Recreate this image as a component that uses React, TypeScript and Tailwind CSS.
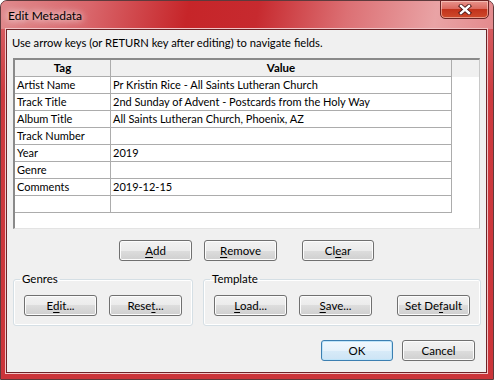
import React from "react";

type Row = { tag: string; value: string };

const rows: Row[] = [
  { tag: "Artist Name", value: "Pr Kristin Rice - All Saints Lutheran Church" },
  { tag: "Track Title", value: "2nd Sunday of Advent - Postcards from the Holy Way" },
  { tag: "Album Title", value: "All Saints Lutheran Church, Phoenix, AZ" },
  { tag: "Track Number", value: "" },
  { tag: "Year", value: "2019" },
  { tag: "Genre", value: "" },
  { tag: "Comments", value: "2019-12-15" },
  { tag: "", value: "" },
];

const btn =
  "h-[21px] rounded-[3px] border border-[#707070] bg-[linear-gradient(#f2f2f2_0%,#ebebeb_50%,#dddddd_50%,#cfcfcf_100%)] shadow-[inset_0_0_0_1px_#fcfcfc] text-[11.5px] leading-none text-black flex items-center justify-center";

const okBtn =
  "h-[21px] rounded-[3px] border border-[#3c7fb1] bg-[linear-gradient(#f1f8fd_0%,#e6f2fb_50%,#d8ebf8_50%,#cde4f5_100%)] shadow-[inset_0_0_0_1px_#bfe4f9] text-[11.5px] leading-none text-black flex items-center justify-center";

const U = ({ children }: { children: React.ReactNode }) => (
  <span className="underline underline-offset-2 decoration-1">{children}</span>
);

const Group = ({
  title,
  className,
  inner,
  children,
}: {
  title: string;
  className: string;
  inner: string;
  children: React.ReactNode;
}) => (
  <fieldset className={`rounded-[3px] border border-[#d5dfe5] shadow-[inset_0_0_0_1px_#ffffff] pb-[9px] ${className}`}>
    <legend className="ml-[6px] px-[2px] text-[11.5px] leading-[14px]">{title}</legend>
    <div className={`flex mt-[9px] ${inner}`}>{children}</div>
  </fieldset>
);

export default function App() {
  return (
    <div className="w-[494px] h-[380px] font-['Lato',sans-serif] text-black">
      <div className="w-[494px] h-[380px] flex flex-col rounded-t-[7px] border border-[#5e3a3c] bg-[linear-gradient(to_bottom,#d9686c_0%,#cd3a3f_25%,#cb3439_100%)] pl-[5px] pr-[6px] pb-[6px]">
        {/* title bar */}
        <div className="h-[28px] -ml-[5px] -mr-[6px] pl-[7px] pr-[4px] flex items-start rounded-t-[6px] bg-[linear-gradient(100deg,#e08a8d_0%,#d9666b_18%,#c62529_38%,#c72a2f_52%,#dc7074_70%,#e9a3a5_88%,#e48a8d_100%)]">
          <span className="self-center text-[12px] leading-[15px] mt-[1px] [text-shadow:0_0_7px_#fff,0_0_10px_rgba(255,255,255,0.8)]">
            Edit Metadata
          </span>
          <div className="ml-auto -mt-px w-[49px] h-[19px] rounded-b-[5px] border border-[#6b2424] bg-[linear-gradient(#e8938c_0%,#db6a5f_45%,#c2331c_50%,#cf4a2b_100%)] shadow-[inset_0_0_0_1px_rgba(255,220,210,0.55)] flex items-center justify-center">
            <svg width="14" height="11" viewBox="0 0 14 11">
              <path d="M3 2 L11 9 M11 2 L3 9" stroke="#4a1414" strokeWidth="4.2" strokeLinecap="square" />
              <path d="M3 2 L11 9 M11 2 L3 9" stroke="#ffffff" strokeWidth="2.4" strokeLinecap="square" />
            </svg>
          </div>
        </div>

        {/* client */}
        <div className="flex-1 flex flex-col bg-[#f0f0f0] border border-[#6d2226] shadow-[0_0_0_1px_#f2c4c6] text-[11px]">
          <div className="mt-[5px] pl-[5px] h-[15px] leading-[15px] text-[11.2px]">
            Use arrow keys (or RETURN key after editing) to navigate fields.
          </div>

          {/* list box */}
          <div className="mt-[8px] ml-[6px] w-[467px] h-[171px] border-t-2 border-l-2 border-t-[#8a8a8a] border-l-[#8a8a8a] border-r border-b border-r-[#c8c8c8] border-b-[#e3e3e3] bg-white flex flex-col">
            <div className="flex h-[17px] bg-[#f0f0f0] leading-[16px] text-[11.5px]">
              <div className="w-[96px] border-r border-b border-[#acacac] text-center font-bold">Tag</div>
              <div className="w-[341px] border-r border-b border-[#acacac] text-center font-bold">Value</div>
            </div>
            {rows.map((r, i) => (
              <div key={i} className="flex h-[17px] leading-[16px]">
                <div className="w-[96px] border-r border-b border-[#acacac] pl-[2px] whitespace-nowrap">{r.tag}</div>
                <div className="w-[341px] border-r border-b border-[#acacac] pl-[2px] whitespace-nowrap overflow-hidden">{r.value}</div>
              </div>
            ))}
          </div>

          {/* Add / Remove / Clear */}
          <div className="flex mt-[11px]">
            <button className={`${btn} ml-[112px] w-[73px]`}>
              <U>A</U>dd
            </button>
            <button className={`${btn} ml-[12px] w-[73px]`}>
              <U>R</U>emove
            </button>
            <button className={`${btn} ml-[25px] w-[72px]`}>
              Cl<U>e</U>ar
            </button>
          </div>

          {/* group boxes */}
          <div className="flex mt-[11px] ml-[6px]">
            <Group title="Genres" className="w-[180px]" inner="pl-[10px]">
              <button className={`${btn} w-[73px]`}>
                E<U>d</U>it...
              </button>
              <button className={`${btn} ml-[12px] w-[73px]`}>
                Rese<U>t</U>...
              </button>
            </Group>
            <Group title="Template" className="ml-[10px] w-[278px]" inner="pl-[10px]">
              <button className={`${btn} w-[73px]`}>
                <U>L</U>oad...
              </button>
              <button className={`${btn} ml-[12px] w-[73px]`}>
                <U>S</U>ave...
              </button>
              <button className={`${btn} ml-[25px] w-[73px]`}>
                Set De<U>f</U>ault
              </button>
            </Group>
          </div>

          {/* OK / Cancel */}
          <div className="flex justify-end mt-[14px] pr-[11px]">
            <button className={`${okBtn} w-[72px]`}>OK</button>
            <button className={`${btn} ml-[9px] w-[73px]`}>Cancel</button>
          </div>
        </div>
      </div>
    </div>
  );
}
